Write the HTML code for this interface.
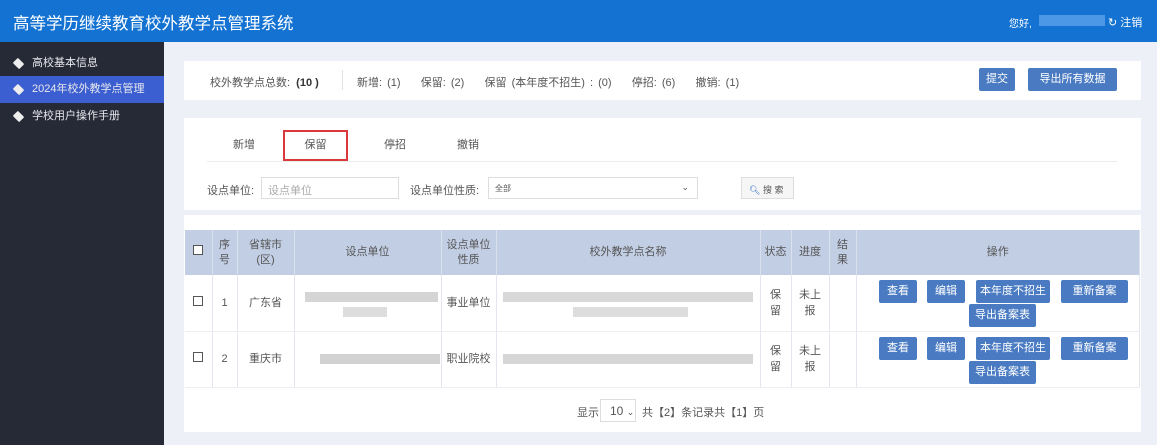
<!DOCTYPE html><html><head><meta charset="utf-8"><style>
*{margin:0;padding:0;box-sizing:border-box}
body{width:1157px;height:445px;overflow:hidden;background:#eef0f7;font-family:"Liberation Sans","Noto Sans CJK SC",sans-serif;font-size:11px;color:#555;position:relative}
.a{position:absolute}
.hdr{left:0;top:0;width:1157px;height:42px;background:#1473d2;color:#fff}
.side{left:0;top:42px;width:164px;height:403px;background:#262936}
.si{position:absolute;left:0;width:164px;height:27px;line-height:27px;color:#e8e8ee;font-size:11px;padding-left:32px}
.si i{position:absolute;left:14px;top:9px;width:9px;height:9px;background:#eee;transform:rotate(45deg) scaleY(.8);border-radius:1px}
.card{background:#fff}
.btn{position:absolute;background:#4a7bc2;color:#fff;border-radius:2px;text-align:center;font-size:11px;line-height:23px;height:23px}
.blur{position:absolute;background:#ddd;height:10px}
table{border-collapse:collapse;position:absolute;left:185px;top:230px;width:955px}
td,th{border-right:1px solid #e3e6ee;text-align:center;font-weight:normal;font-size:11px;color:#555}
th{background:#c2cee4;height:45px;line-height:15px;border-right:1px solid #d9e0ee}
tr.r td{height:56px;border-bottom:1px solid #eceef3;line-height:16px}
.cb{display:inline-block;width:10px;height:10px;border:1px solid #555;background:#fff}
</style></head><body>
<div class="a hdr"><div class="a" style="left:13px;top:10px;font-size:16.5px">高等学历继续教育校外教学点管理系统</div>
<div class="a" style="left:1009px;top:15px;font-size:10px">您好,</div><div class="a" style="left:1039px;top:15px;width:66px;height:11px;background:#4c98e6"></div><div class="a" style="left:1108px;top:14px;font-size:11px">↻ 注销</div></div>
<div class="a side">
<div class="si" style="top:8px"><i></i>高校基本信息</div>
<div class="si" style="top:34px;background:#3b5fd0"><i></i>2024年校外教学点管理</div>
<div class="si" style="top:61px"><i></i>学校用户操作手册</div></div>
<div class="a card" style="left:184px;top:61px;width:957px;height:39px">
<div class="a" style="left:26px;top:13px">校外教学点总数: &nbsp;<b style="color:#333">(10 )</b></div>
<div class="a" style="left:158px;top:9px;width:1px;height:20px;background:#e3e3e3"></div>
<div class="a" style="left:173px;top:13px;word-spacing:2px">新增: (1) &nbsp;&nbsp; 保留: (2) &nbsp;&nbsp; 保留 (本年度不招生) : (0) &nbsp;&nbsp; 停招: (6) &nbsp;&nbsp; 撤销: (1)</div>
<div class="btn" style="left:795px;top:7px;width:36px">提交</div>
<div class="btn" style="left:844px;top:7px;width:89px">导出所有数据</div></div>
<div class="a card" style="left:184px;top:118px;width:957px;height:92px">
<div class="a" style="left:49px;top:18px">新增</div>
<div class="a" style="left:99px;top:12px;width:65px;height:31px;border:2px solid #d9393a;text-align:center;line-height:27px">保留</div>
<div class="a" style="left:200px;top:18px">停招</div>
<div class="a" style="left:273px;top:18px">撤销</div>
<div class="a" style="left:23px;top:43px;width:910px;height:1px;background:#ececec"></div>
<div class="a" style="left:23px;top:64px">设点单位:</div>
<div class="a" style="left:77px;top:59px;width:138px;height:22px;border:1px solid #ddd;color:#aaa;padding:4px 6px">设点单位</div>
<div class="a" style="left:226px;top:64px">设点单位性质:</div>
<div class="a" style="left:304px;top:59px;width:210px;height:22px;border:1px solid #ddd;font-size:8px;padding:5px 6px">全部<span style="position:absolute;right:8px;top:4px;font-size:9px">⌄</span></div>
<div class="a" style="left:557px;top:59px;width:53px;height:22px;border:1px solid #ddd;background:#f6f6f6;font-size:9px;padding:5px 7px"><span style="color:#2b6cc4">🔍︎</span> 搜 索</div></div>
<div class="a card" style="left:184px;top:215px;width:957px;height:217px"></div>
<table><tr><th style="width:27px"><span class="cb"></span></th><th style="width:25px">序<br>号</th><th style="width:57px">省辖市<br>(区)</th><th style="width:147px">设点单位</th><th style="width:55px">设点单位<br>性质</th><th style="width:264px">校外教学点名称</th><th style="width:31px">状态</th><th style="width:38px">进度</th><th style="width:27px">结<br>果</th><th>操作</th></tr>
<tr class="r"><td><span class="cb"></span></td><td>1</td><td>广东省</td><td></td><td>事业单位</td><td></td><td>保<br>留</td><td>未上<br>报</td><td></td><td></td></tr>
<tr class="r"><td><span class="cb"></span></td><td>2</td><td>重庆市</td><td></td><td>职业院校</td><td></td><td>保<br>留</td><td>未上<br>报</td><td></td><td></td></tr></table>
<div class="blur" style="left:305px;top:292px;width:133px;background:#d5d5d5"></div><div class="blur" style="left:343px;top:307px;width:44px"></div>
<div class="blur" style="left:503px;top:292px;width:250px;background:#d8d8d8"></div><div class="blur" style="left:573px;top:307px;width:115px"></div>
<div class="blur" style="left:320px;top:354px;width:120px;background:#d2d2d2"></div>
<div class="blur" style="left:503px;top:354px;width:250px;background:#d6d6d6"></div>
<div class="btn" style="left:879px;top:280px;width:38px">查看</div><div class="btn" style="left:927px;top:280px;width:38px">编辑</div><div class="btn" style="left:976px;top:280px;width:74px">本年度不招生</div><div class="btn" style="left:1061px;top:280px;width:67px">重新备案</div><div class="btn" style="left:969px;top:304px;width:67px">导出备案表</div>
<div class="btn" style="left:879px;top:337px;width:38px">查看</div><div class="btn" style="left:927px;top:337px;width:38px">编辑</div><div class="btn" style="left:976px;top:337px;width:74px">本年度不招生</div><div class="btn" style="left:1061px;top:337px;width:67px">重新备案</div><div class="btn" style="left:969px;top:361px;width:67px">导出备案表</div>
<div class="a" style="left:577px;top:404px">显示</div>
<div class="a" style="left:600px;top:399px;width:36px;height:23px;border:1px solid #ddd;font-size:12px;padding:4px 0 0 9px">10 <span style="font-size:9px">⌄</span></div>
<div class="a" style="left:642px;top:404px">共【2】条记录共【1】页</div>
</body></html>
